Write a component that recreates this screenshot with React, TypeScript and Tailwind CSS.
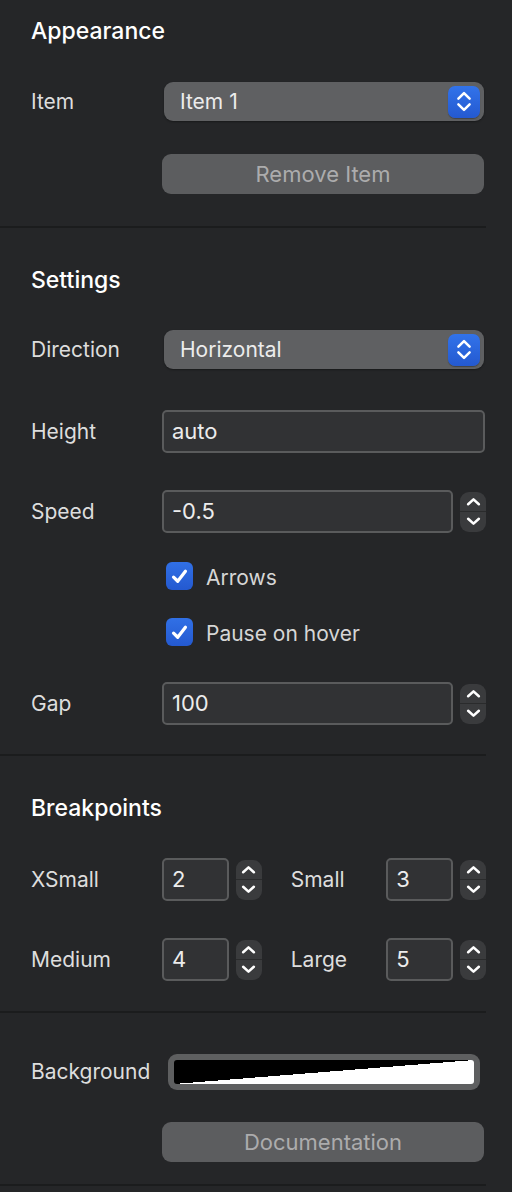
import React from "react";

const font = { fontFamily: "Inter, 'Noto Sans', sans-serif" };

function Chevrons({ className }: { className?: string }) {
  return (
    <svg viewBox="0 0 16 24" className={className} fill="none" stroke="currentColor" strokeWidth="2.2" strokeLinecap="round" strokeLinejoin="round">
      <path d="M3 9.5 8 4.5 13 9.5" />
      <path d="M3 14.5 8 19.5 13 14.5" />
    </svg>
  );
}

function Stepper() {
  return (
    <div className="flex h-[40px] w-[26px] shrink-0 flex-col overflow-hidden rounded-[9px] bg-[#3a3b3d] text-white">
      <div className="flex flex-1 items-center justify-center border-b border-[#2a2b2c]">
        <svg viewBox="0 0 14 8" className="h-[9px] w-[15px]" fill="none" stroke="currentColor" strokeWidth="2.4" strokeLinecap="round" strokeLinejoin="round">
          <path d="M2 6.5 7 2l5 4.5" />
        </svg>
      </div>
      <div className="flex flex-1 items-center justify-center">
        <svg viewBox="0 0 14 8" className="h-[9px] w-[15px]" fill="none" stroke="currentColor" strokeWidth="2.4" strokeLinecap="round" strokeLinejoin="round">
          <path d="M2 1.5 7 6l5-4.5" />
        </svg>
      </div>
    </div>
  );
}

function Select({ value }: { value: string }) {
  return (
    <div className="ml-[2px] flex h-[39px] w-[320px] items-center justify-between rounded-[9px] bg-[#5f6062] pl-[16px] pr-[4px] text-[21px] text-[#ececec] shadow-[0_1px_2px_rgba(0,0,0,0.35)]">
      <span>{value}</span>
      <div className="flex h-[32px] w-[32px] items-center justify-center rounded-[7px] bg-gradient-to-b from-[#3273ea] to-[#2459d0] text-white shadow-[0_1px_1px_rgba(0,0,0,0.3)]">
        <Chevrons className="h-[27px] w-[18px]" />
      </div>
    </div>
  );
}

function Field({ value, w }: { value: string; w: string }) {
  return (
    <div className={`flex h-[43px] items-center rounded-[5px] border-2 border-[#5a5b5c] bg-[#313234] pl-[8px] text-[22px] text-[#ececec] ${w}`}>
      {value}
    </div>
  );
}

function Label({ children, w = "w-[131px]" }: { children: React.ReactNode; w?: string }) {
  return <div className={`${w} shrink-0 text-[21px] text-[#dddddd]`}>{children}</div>;
}

function Heading({ children, mt }: { children: React.ReactNode; mt: string }) {
  return <div className={`${mt} h-[30px] pl-[31px] text-[23px] font-medium leading-[30px] text-white`}>{children}</div>;
}

function Button({ children, mt }: { children: React.ReactNode; mt: string }) {
  return (
    <div className={`${mt} ml-[162px] flex h-[40px] w-[322px] items-center justify-center rounded-[9px] bg-[#5c5d5f] text-[22px] text-[#acacad]`}>
      {children}
    </div>
  );
}

function Check({ label, mt }: { label: string; mt: string }) {
  return (
    <div className={`${mt} ml-[166px] flex h-[28px] items-center gap-[13px]`}>
      <div className="flex h-[28px] w-[27px] items-center justify-center rounded-[6px] bg-gradient-to-b from-[#3170e6] to-[#2459d0]">
        <svg viewBox="0 0 16 16" className="h-[19px] w-[19px]" fill="none" stroke="white" strokeWidth="2.7" strokeLinecap="round" strokeLinejoin="round">
          <path d="M3 8.5 6.5 12 13 3.5" />
        </svg>
      </div>
      <span className="pt-[4px] text-[21px] text-[#d6d6d6]">{label}</span>
    </div>
  );
}

function Divider() {
  return <div className="h-[2px] w-[486px] bg-[#1b1c1d]" />;
}

export default function App() {
  return (
    <div className="h-[1192px] w-[512px] overflow-hidden bg-[#252628]" style={font}>
      <div className="flex w-[486px] flex-col">
        {/* Appearance */}
        <Heading mt="mt-[16px]">Appearance</Heading>
        <div className="mt-[36px] flex items-center pl-[31px]">
          <Label>Item</Label>
          <Select value="Item 1" />
        </div>
        <Button mt="mt-[33px]">Remove Item</Button>
        <div className="mt-[32px]">
          <Divider />
        </div>

        {/* Settings */}
        <Heading mt="mt-[37px]">Settings</Heading>
        <div className="mt-[35px] flex items-center pl-[31px]">
          <Label>Direction</Label>
          <Select value="Horizontal" />
        </div>
        <div className="mt-[41px] flex items-center pl-[31px]">
          <Label>Height</Label>
          <Field value="auto" w="w-[323px]" />
        </div>
        <div className="mt-[37px] flex items-center pl-[31px]">
          <Label>Speed</Label>
          <Field value="-0.5" w="w-[291px]" />
          <div className="ml-[7px]">
            <Stepper />
          </div>
        </div>
        <Check label="Arrows" mt="mt-[29px]" />
        <Check label="Pause on hover" mt="mt-[28px]" />
        <div className="mt-[36px] flex items-center pl-[31px]">
          <Label>Gap</Label>
          <Field value="100" w="w-[291px]" />
          <div className="ml-[7px]">
            <Stepper />
          </div>
        </div>
        <div className="mt-[29px]">
          <Divider />
        </div>

        {/* Breakpoints */}
        <Heading mt="mt-[37px]">Breakpoints</Heading>
        {[
          ["XSmall", "2", "Small", "3"],
          ["Medium", "4", "Large", "5"],
        ].map((r, i) => (
          <div key={r[0]} className={`${i === 0 ? "mt-[35px]" : "mt-[37px]"} flex items-center pl-[31px]`}>
            <Label>{r[0]}</Label>
            <Field value={r[1]} w="w-[67px]" />
            <div className="ml-[7px]">
              <Stepper />
            </div>
            <div className="ml-[29px] w-[96px] text-[21px] text-[#dddddd]">{r[2]}</div>
            <Field value={r[3]} w="w-[67px]" />
            <div className="ml-[7px]">
              <Stepper />
            </div>
          </div>
        ))}
        <div className="mt-[30px]">
          <Divider />
        </div>

        {/* Background */}
        <div className="mt-[41px] flex items-center pl-[31px]">
          <Label w="w-[137px]">Background</Label>
          <div className="h-[36px] w-[312px] rounded-[9px] bg-[#5e5f60] p-[6px]">
            <div className="h-full w-full rounded-[3px] bg-[linear-gradient(to_bottom_right,#000_50%,#fff_50%)]" />
          </div>
        </div>
        <Button mt="mt-[32px]">Documentation</Button>
        <div className="mt-[22px]">
          <Divider />
        </div>
      </div>
    </div>
  );
}
